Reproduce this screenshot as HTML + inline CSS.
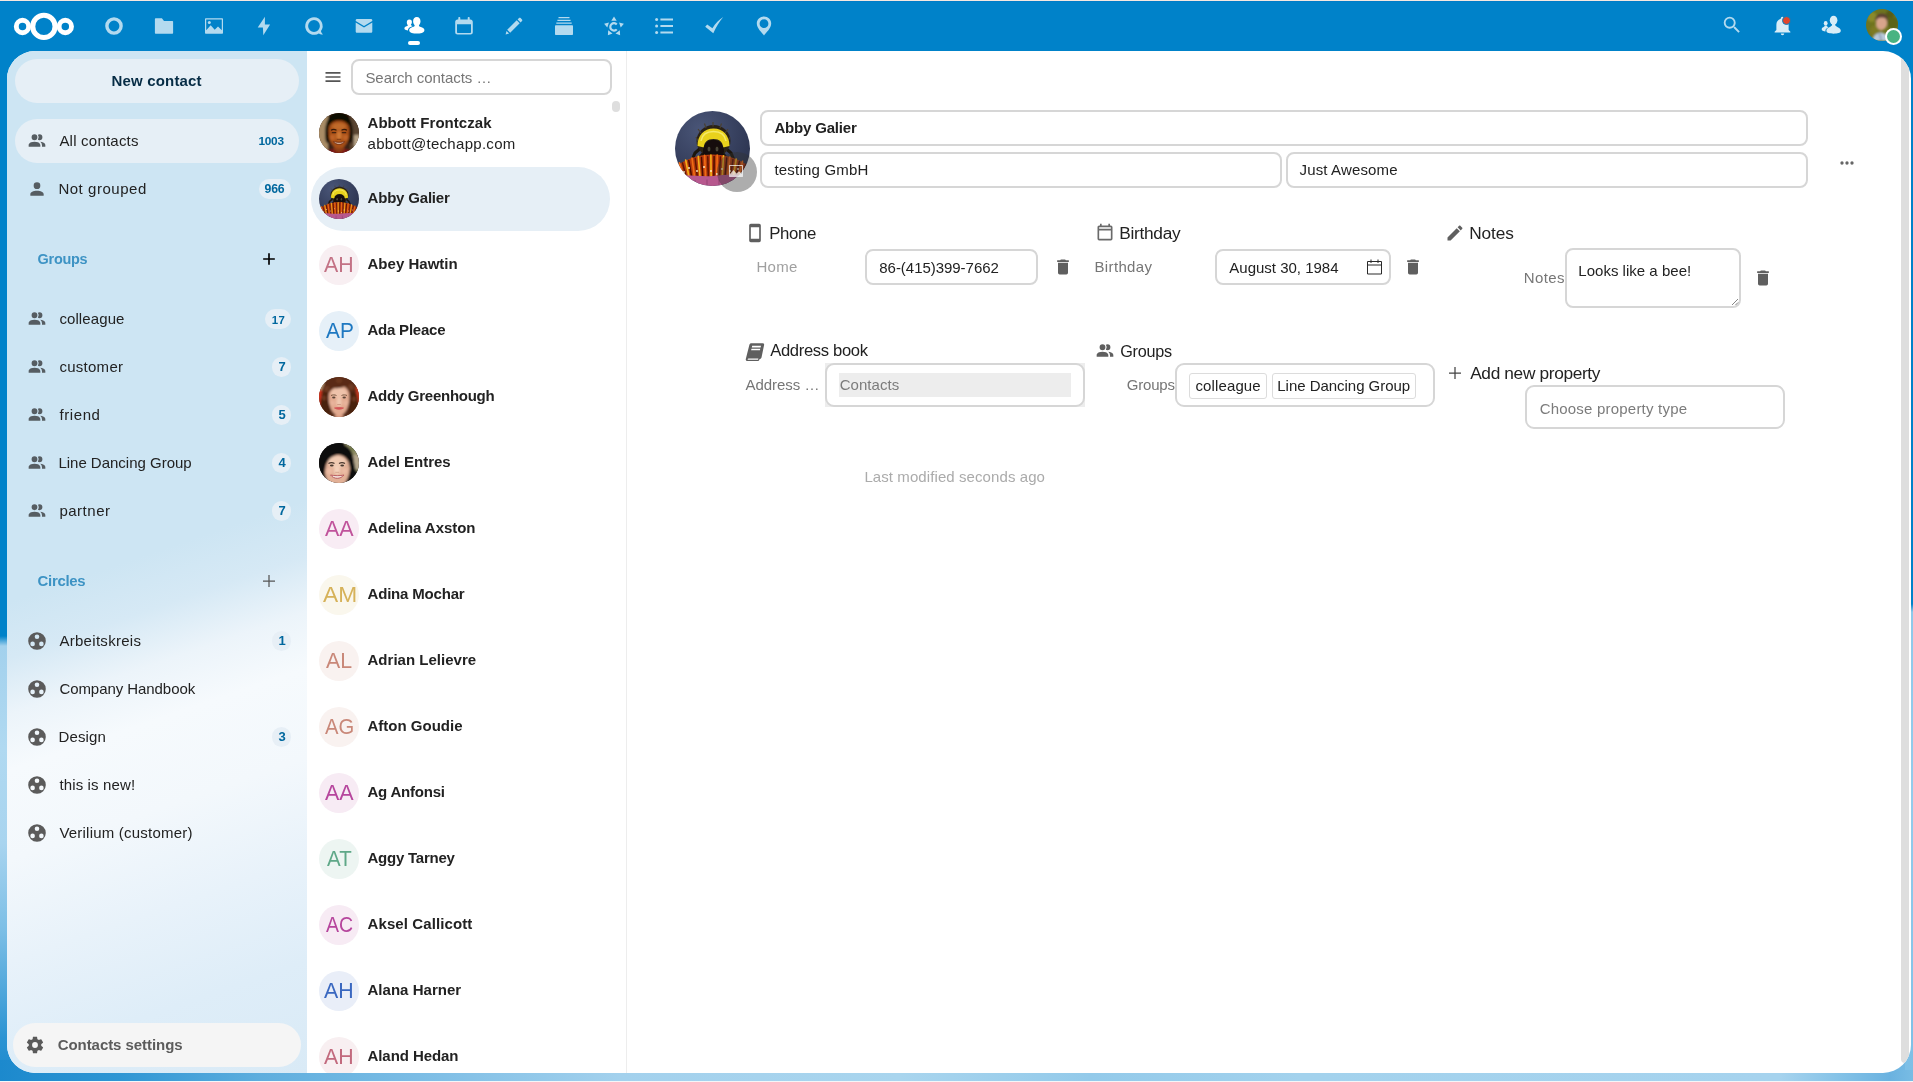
<!DOCTYPE html><html lang="en"><head><meta charset="utf-8"><title>Contacts - Nextcloud</title><style>
*{box-sizing:border-box}
html,body{margin:0;padding:0}
body{width:1913px;height:1082px;overflow:hidden;position:relative;background:#0082c9;font-family:"Liberation Sans",sans-serif;font-size:15px;color:#222}
.a{position:absolute}
.t{position:absolute;white-space:pre}
.i{position:absolute;display:block;overflow:visible}
#bg{position:absolute;left:0;top:0;width:1913px;height:1082px;background:#0082c9}
#content{position:absolute;left:7px;top:51px;width:1904px;height:1022px;border-radius:28px;overflow:hidden;background:#fff}
.pill{position:absolute;border-radius:22px}
.inp{position:absolute;border:2px solid #d6d6d6;border-radius:8px;background:#fff}
.cnt{position:absolute;height:20px;border-radius:10px;background:#e6eff6}
 #tx{position:absolute;left:0;top:0;width:1913px;height:1082px;will-change:transform}
.av{position:absolute;width:40px;height:40px;border-radius:50%;overflow:hidden}
</style></head><body><div id="bg"></div>
<div class="a" style="left:0;top:628px;width:12px;height:454px;background:linear-gradient(180deg,#0082c9 0,#0082c9 8px,#a3d1ed 18px,#b0d9f1 120px,#a8d4ef 215px,#7dbfe6 300px,#4aa4da 370px,#2a93d3 410px,#1c89cd 454px)"></div>
<div class="a" style="left:0;top:1060px;width:1913px;height:21px;background:linear-gradient(90deg,#1c89cd 0,#2f96d4 120px,#5eaede 260px,#7cbde5 420px,#a3d1ed 620px,#a9d5ee 900px,#93caea 1090px,#a3d2ed 1300px,#a6d3ee 1780px,#84c2e7 1840px,#6ab2e0 1890px,#78bce4 1913px)"></div>
<div class="a" style="left:1905px;top:600px;width:8px;height:470px;background:linear-gradient(180deg,#0082c9 0,#0082c9 4px,#8fc9ea 12px,#93cbeb 200px,#86c4e8 380px,#7dbfe6 470px)"></div>
<div class="a" style="left:0;top:0;width:1913px;height:1px;background:#f5e8e0"></div><div class="a" style="left:0;top:1px;width:1913px;height:1px;background:#007cc8"></div>
<div class="a" style="left:0;top:1081px;width:1913px;height:1px;background:#f4f6f8"></div>
<svg class="i" style="left:10px;top:8px" width="70" height="38" viewBox="10 8 70 38"><circle cx="43.9" cy="26.4" r="11.15" fill="none" stroke="#fff" stroke-width="5.1"/><circle cx="22.5" cy="26.5" r="6.2" fill="none" stroke="#fff" stroke-width="4.9"/><circle cx="65.3" cy="26.5" r="6.2" fill="none" stroke="#fff" stroke-width="4.9"/></svg><svg class="i" style="left:104.00px;top:16.00px;color:#b3daef" width="20" height="20" viewBox="0 0 20 20" fill="currentColor"><circle cx="10" cy="10" r="7.1" fill="none" stroke="currentColor" stroke-width="3.4"/></svg><svg class="i" style="left:154.00px;top:16.00px;color:#b3daef" width="20" height="20" viewBox="0 0 20 20" fill="currentColor"><path d="M1.6 2.3c-.4 0-.7.3-.7.7v14c0 .4.3.7.7.7h16.8c.4 0 .7-.3.7-.7V5.6c0-.4-.3-.7-.7-.7H10L7.900 2.300z"/></svg><svg class="i" style="left:204.00px;top:16.00px;color:#b3daef" width="20" height="20" viewBox="0 0 20 20" fill="currentColor"><path fill-rule="evenodd" d="M1.7 2.300h16.600c.4 0 .7.300.7.700v14c0 .400-.3.700-.7.700H1.700c-.4 0-.7-.3-.7-.7V3c0-.4.3-.7.7-.7zM2.200 3.500v10.700l4.500-5 4 4.500 3.300-3.100 3.800 3.600V3.500z"/><circle cx="5.300" cy="6.400" r="1.500"/></svg><svg class="i" style="left:254.00px;top:16.00px;color:#b3daef" width="20" height="20" viewBox="0 0 20 20" fill="currentColor"><path d="M10.900.800 3.700 11.400h5.200L9.300 19.200 16.100 8.600h-5.200z"/></svg><svg class="i" style="left:304.00px;top:16.00px;color:#b3daef" width="20" height="20" viewBox="0 0 20 20" fill="currentColor"><path fill-rule="evenodd" d="M10 1.200a8.800 8.800 0 1 0 4.700 16.250c1 .55 2.700 1.100 4.300.95-1.300-1.050-1.900-2.300-2.050-3.300A8.800 8.800 0 0 0 10 1.200zm0 2.900a5.900 5.900 0 1 1 0 11.800 5.900 5.900 0 0 1 0-11.800z"/></svg><svg class="i" style="left:354.00px;top:16.00px;color:#b3daef" width="20" height="20" viewBox="0 0 20 20" fill="currentColor"><path d="M3 3.100c-.7 0-1.300.6-1.300 1.300v.5l8.300 5.100 8.300-5.100v-.5c0-.7-.6-1.300-1.300-1.300zM1.700 6.500v8.900c0 .7.600 1.300 1.300 1.300h14c.7 0 1.300-.6 1.300-1.300V6.500l-8.300 5.100z"/></svg><svg class="i" style="left:404.00px;top:16.00px;color:#fff" width="20" height="20" viewBox="0 0 20 20" fill="currentColor"><path d="M12.800.9c-2.300 0-3.700 1.800-3.700 4.300 0 1.500.5 2.900 1.400 3.800.3.300.3.900-.1 1.200-.8.500-2.600 1-3.900 1.800-.9.600-1.300 1.300-1.300 2.300 0 1.700 1.300 2.300 2.500 2.700 1.500.4 3.300.5 5.100.5s3.600-.1 5.100-.5c1.200-.4 2.500-1 2.500-2.700 0-1-.4-1.700-1.300-2.300-1.300-.8-3.100-1.300-3.900-1.800-.4-.3-.4-.9-.1-1.200.9-.9 1.400-2.300 1.400-3.800 0-2.500-1.400-4.300-3.700-4.300z"/><path d="M5.200 3.600c-1.500 0-2.400 1.200-2.400 2.800 0 1 .3 1.900.9 2.500.2.200.2.600-.1.800-.5.300-1.500.6-2.300 1.100-.6.400-.9.900-.9 1.500 0 1.100.8 1.500 1.600 1.800.6.200 1.300.3 2 .300-.1-.9.300-2.100 1.500-2.900 1-.6 2.300-1.100 3.300-1.500-.7-.3-1.300-.5-1.700-.8-.3-.2-.3-.6-.1-.8.600-.6.900-1.500.9-2.500 0-.5-.1-1-.3-1.400-.4-.6-1.200-.9-2.400-.9z"/></svg><svg class="i" style="left:454.00px;top:16.00px;color:#b3daef" width="20" height="20" viewBox="0 0 20 20" fill="currentColor"><path fill-rule="evenodd" d="M5.300 1c-.6 0-1 .4-1 1v1.600H3.500c-1.300 0-2.300 1-2.300 2.300v10.400c0 1.300 1 2.300 2.300 2.300h13c1.300 0 2.300-1 2.300-2.300V5.900c0-1.300-1-2.300-2.300-2.300h-.8V2c0-.6-.4-1-1-1s-1 .4-1 1v1.600H6.300V2c0-.6-.4-1-1-1zM3 8.300h14v7.900c0 .4-.3.700-.7.700H3.700c-.4 0-.7-.3-.7-.7z"/></svg><svg class="i" style="left:504.00px;top:16.00px;color:#b3daef" width="20" height="20" viewBox="0 0 20 20" fill="currentColor"><path d="M15.800 1.700c-.3 0-.6.100-.8.300l-1.400 1.400 3 3 1.400-1.400c.4-.4.4-1.100 0-1.600l-1.400-1.400c-.2-.2-.5-.3-.8-.3zM12.700 4.300 3.200 13.800l3 3 9.500-9.500zM2.500 14.900l-.9 3.500 3.500-.9z"/></svg><svg class="i" style="left:554.00px;top:16.00px;color:#b3daef" width="20" height="20" viewBox="0 0 20 20" fill="currentColor"><path d="M4.500 1h11v1.300h-11zM3.400 3.700h13.200V5H3.400zM2.300 6.400h15.400v1.300H2.300zM2 9.200c-.6 0-1 .4-1 1V18c0 .6.400 1 1 1h16c.6 0 1-.4 1-1v-7.800c0-.6-.4-1-1-1z"/></svg><svg class="i" style="left:604.00px;top:16.00px;color:#b3daef" width="20" height="20" viewBox="0 0 20 20" fill="currentColor"><path d="M10.00 0.50L12.70 4.70L7.30 4.70zM19.89 7.69L16.73 11.55L15.06 6.42zM16.11 19.31L11.46 17.50L15.83 14.33zM3.89 19.31L4.17 14.33L8.54 17.50zM0.11 7.69L4.94 6.42L3.27 11.55z"/><path fill="none" stroke="currentColor" stroke-width="2.2" d="M12.75 13.38A3.70 3.70 0 1 1 12.75 8.42"/></svg><svg class="i" style="left:654.00px;top:16.00px;color:#b3daef" width="20" height="20" viewBox="0 0 20 20" fill="currentColor"><circle cx="2.600" cy="3.600" r="1.500"/><circle cx="2.600" cy="10" r="1.500"/><circle cx="2.600" cy="16.400" r="1.500"/><path d="M6.400 2.600H19v2H6.400zM6.400 9H19v2H6.400zM6.400 15.400H19v2H6.400z"/></svg><svg class="i" style="left:704.00px;top:16.00px;color:#b3daef" width="20" height="20" viewBox="0 0 20 20" fill="currentColor"><path d="M19.300 1C15.500 5.500 12 11 9.300 17.200L1.200 10.800l2-2.200 5.200 3.700C11.500 7.500 15 3.500 19.300 1z"/></svg><svg class="i" style="left:754.00px;top:16.00px;color:#b3daef" width="20" height="20" viewBox="0 0 20 20" fill="currentColor"><path fill-rule="evenodd" d="M10 .6C6 .6 2.800 3.700 2.800 7.600c0 4.900 5 8.800 7.200 11.900 2.200-3.100 7.200-7 7.200-11.900C17.200 3.700 14 .6 10 .6zm0 2.700a4.400 4.400 0 1 1 0 8.800 4.400 4.400 0 0 1 0-8.800z"/></svg><div class="a" style="left:408px;top:40.5px;width:12px;height:4px;border-radius:2px;background:#fff"></div><svg class="i" style="left:1721.00px;top:14.40px;" width="22" height="22" viewBox="0 0 24 24"><path fill="#b3daef" d="M9.5,3A6.5,6.5 0 0,1 16,9.5C16,11.11 15.41,12.59 14.44,13.73L14.71,14H15.5L20.5,19L19,20.5L14,15.5V14.71L13.73,14.44C12.59,15.41 11.11,16 9.5,16A6.5,6.5 0 0,1 3,9.5A6.5,6.5 0 0,1 9.5,3M9.5,5C7,5 5,7 5,9.5C5,12 7,14 9.5,14C12,14 14,12 14,9.5C14,7 12,5 9.5,5Z"/></svg><svg class="i" style="left:1771.50px;top:15.10px;" width="21" height="21" viewBox="0 0 24 24"><path fill="#d9edf7" d="M21,19V20H3V19L5,17V11C5,7.9 7.03,5.17 10,4.29C10,4.19 10,4.1 10,4A2,2 0 0,1 12,2A2,2 0 0,1 14,4C14,4.1 14,4.19 14,4.29C16.97,5.17 19,7.9 19,11V17L21,19M14,21A2,2 0 0,1 12,23A2,2 0 0,1 10,21"/></svg><div class="a" style="left:1781.9px;top:15.700px;width:9.2px;height:9.2px;border-radius:50%;background:#e0452c;border:1.300px solid #0082c9"></div><svg class="i" style="left:1819px;top:13px" width="24" height="24" viewBox="1819 13 24 24" fill="#d9edf7"><ellipse cx="1833.6" cy="20.3" rx="3.800" ry="4.500"/><path d="M1826.400 30.800c0-3.300 3.800-3.600 5.500-5.400.3-.4.300-1 0-1.400h3.400c-.3.400-.3 1 0 1.400 1.700 1.800 5.500 2.100 5.500 5.400 0 2.200-3.600 2.900-7.200 2.900s-7.200-.7-7.200-2.900z"/><ellipse cx="1825.700" cy="23.300" rx="1.900" ry="2.300"/><path d="M1821.700 29.200c0-1.700 1.900-1.900 2.800-2.900.2-.2.200-.5 0-.8h2.400c-.2.300-.2.600 0 .8.400.400 1 .700 1.600 1-1.700.800-3.100 1.700-3.100 3.600 0 .2 0 .3.100.5-2.100-.2-3.800-.8-3.800-2.200z"/></svg><svg class="i" style="left:1866px;top:9px" width="32" height="32" viewBox="0 0 32 32"><defs><clipPath id="uc"><circle cx="16" cy="16" r="16"/></clipPath><filter id="ub"><feGaussianBlur stdDeviation="0.9"/></filter></defs><g clip-path="url(#uc)"><rect width="32" height="32" fill="#6e7420"/><g filter="url(#ub)"><circle cx="6" cy="8" r="5" fill="#8a8a2c"/><circle cx="27" cy="14" r="6" fill="#5c6418"/><circle cx="10" cy="22" r="6" fill="#7d7a22"/><circle cx="24" cy="5" r="4" fill="#565c14"/><path d="M6 32c1-6 5-8 9-8.500 4 .5 8 2.500 9 8.500z" fill="#b9c9da"/><ellipse cx="15.500" cy="14" rx="5.600" ry="7" fill="#d8a58c"/><path d="M9.300 13c-.8-5 2-8.500 6.500-8.500s7 3 6 8.500c-1-3-2.500-4.500-6-4.500s-5.500 1.500-6.500 4.500z" fill="#5b4032"/><path d="M13.500 24.500 15.500 32" stroke="#6e7f95" stroke-width="1"/></g></g></svg><div class="a" style="left:1885px;top:28px;width:17px;height:17px;border-radius:50%;background:#fff"></div><div class="a" style="left:1887px;top:30px;width:13px;height:13px;border-radius:50%;background:#49b382"></div>
<div id="content"><div class="a" style="left:0;top:0;width:300px;height:1022px;background:linear-gradient(180deg,rgba(205,229,243,0) 0,rgba(205,229,243,0) 100%),linear-gradient(161deg,#cde5f3 0,#cde5f3 49%,#d6e9f5 54%,#ecf4fa 59%,#f6fafd 64%,#f3f8fc 72%,#e8f2fa 81%,#deedf8 90%,#d9eaf6 100%)"></div><div class="a" style="left:619px;top:0;width:1px;height:1022px;background:#ededed"></div><div class="a" style="left:1894px;top:6px;width:8px;height:1006px;border-radius:0 0 4px 4px;background:#dedede"></div></div>
<div class="pill" style="left:15px;top:59px;width:284px;height:44px;background:#e6eff6"></div><div class="pill" style="left:15px;top:119px;width:284px;height:44px;background:#e6eff6"></div><svg class="i" style="left:27.00px;top:131.00px;" width="20" height="20" viewBox="0 0 24 24"><path fill="#565d62" d="M16 17V19H2V17S2 13 9 13 16 17 16 17M12.5 7.5A3.5 3.5 0 1 0 9 11A3.5 3.5 0 0 0 12.5 7.5M15.94 13A5.32 5.32 0 0 1 18 17V19H22V17S22 13.37 15.94 13M15 4A3.39 3.39 0 0 0 13.07 4.59A5 5 0 0 1 13.07 10.41A3.39 3.39 0 0 0 15 11A3.5 3.5 0 0 0 15 4Z"/></svg><svg class="i" style="left:27.00px;top:179.00px;" width="20" height="20" viewBox="0 0 24 24"><path fill="#565d62" d="M12,4A4,4 0 0,1 16,8A4,4 0 0,1 12,12A4,4 0 0,1 8,8A4,4 0 0,1 12,4M12,14C16.42,14 20,15.79 20,18V20H4V18C4,15.79 7.58,14 12,14Z"/></svg><div class="cnt" style="left:259px;top:179px;width:32px"></div><svg class="i" style="left:259.00px;top:249.00px;" width="20" height="20" viewBox="0 0 24 24"><path fill="#000" d="M19,13H13V19H11V13H5V11H11V5H13V11H19V13Z"/></svg><svg class="i" style="left:27.00px;top:309.00px;" width="20" height="20" viewBox="0 0 24 24"><path fill="#565d62" d="M16 17V19H2V17S2 13 9 13 16 17 16 17M12.5 7.5A3.5 3.5 0 1 0 9 11A3.5 3.5 0 0 0 12.5 7.5M15.94 13A5.32 5.32 0 0 1 18 17V19H22V17S22 13.37 15.94 13M15 4A3.39 3.39 0 0 0 13.07 4.59A5 5 0 0 1 13.07 10.41A3.39 3.39 0 0 0 15 11A3.5 3.5 0 0 0 15 4Z"/></svg><div class="cnt" style="left:265px;top:309px;width:26px"></div><svg class="i" style="left:27.00px;top:357.00px;" width="20" height="20" viewBox="0 0 24 24"><path fill="#565d62" d="M16 17V19H2V17S2 13 9 13 16 17 16 17M12.5 7.5A3.5 3.5 0 1 0 9 11A3.5 3.5 0 0 0 12.5 7.5M15.94 13A5.32 5.32 0 0 1 18 17V19H22V17S22 13.37 15.94 13M15 4A3.39 3.39 0 0 0 13.07 4.59A5 5 0 0 1 13.07 10.41A3.39 3.39 0 0 0 15 11A3.5 3.5 0 0 0 15 4Z"/></svg><div class="cnt" style="left:272px;top:357px;width:19px"></div><svg class="i" style="left:27.00px;top:405.00px;" width="20" height="20" viewBox="0 0 24 24"><path fill="#565d62" d="M16 17V19H2V17S2 13 9 13 16 17 16 17M12.5 7.5A3.5 3.5 0 1 0 9 11A3.5 3.5 0 0 0 12.5 7.5M15.94 13A5.32 5.32 0 0 1 18 17V19H22V17S22 13.37 15.94 13M15 4A3.39 3.39 0 0 0 13.07 4.59A5 5 0 0 1 13.07 10.41A3.39 3.39 0 0 0 15 11A3.5 3.5 0 0 0 15 4Z"/></svg><div class="cnt" style="left:272px;top:405px;width:19px"></div><svg class="i" style="left:27.00px;top:453.00px;" width="20" height="20" viewBox="0 0 24 24"><path fill="#565d62" d="M16 17V19H2V17S2 13 9 13 16 17 16 17M12.5 7.5A3.5 3.5 0 1 0 9 11A3.5 3.5 0 0 0 12.5 7.5M15.94 13A5.32 5.32 0 0 1 18 17V19H22V17S22 13.37 15.94 13M15 4A3.39 3.39 0 0 0 13.07 4.59A5 5 0 0 1 13.07 10.41A3.39 3.39 0 0 0 15 11A3.5 3.5 0 0 0 15 4Z"/></svg><div class="cnt" style="left:272px;top:453px;width:19px"></div><svg class="i" style="left:27.00px;top:501.00px;" width="20" height="20" viewBox="0 0 24 24"><path fill="#565d62" d="M16 17V19H2V17S2 13 9 13 16 17 16 17M12.5 7.5A3.5 3.5 0 1 0 9 11A3.5 3.5 0 0 0 12.5 7.5M15.94 13A5.32 5.32 0 0 1 18 17V19H22V17S22 13.37 15.94 13M15 4A3.39 3.39 0 0 0 13.07 4.59A5 5 0 0 1 13.07 10.41A3.39 3.39 0 0 0 15 11A3.5 3.5 0 0 0 15 4Z"/></svg><div class="cnt" style="left:272px;top:501px;width:19px"></div><svg class="i" style="left:263px;top:575px" width="12" height="12" viewBox="0 0 12 12"><path d="M6 0v12M0 6h12" stroke="#555" stroke-width="1.250" fill="none"/></svg><svg class="i" style="left:27.00px;top:631.00px;" width="20" height="20" viewBox="0 0 20 20"><path fill="#5b5b5b" fill-rule="evenodd" d="M10 1.200a8.800 8.800 0 1 0 0 17.600 8.800 8.800 0 0 0 0-17.600zm0 2.300a2.300 2.300 0 1 1 0 4.600 2.300 2.300 0 0 1 0-4.600zM5.600 10.600a2.300 2.300 0 1 1 0 4.600 2.300 2.300 0 0 1 0-4.600zm8.800 0a2.300 2.300 0 1 1 0 4.600 2.300 2.300 0 0 1 0-4.600z"/></svg><div class="cnt" style="left:272px;top:631px;width:19px;background:#e7eff6"></div><svg class="i" style="left:27.00px;top:679.00px;" width="20" height="20" viewBox="0 0 20 20"><path fill="#5b5b5b" fill-rule="evenodd" d="M10 1.200a8.800 8.800 0 1 0 0 17.600 8.800 8.800 0 0 0 0-17.600zm0 2.300a2.300 2.300 0 1 1 0 4.600 2.300 2.300 0 0 1 0-4.600zM5.600 10.600a2.300 2.300 0 1 1 0 4.600 2.300 2.300 0 0 1 0-4.600zm8.800 0a2.300 2.300 0 1 1 0 4.600 2.300 2.300 0 0 1 0-4.600z"/></svg><svg class="i" style="left:27.00px;top:727.00px;" width="20" height="20" viewBox="0 0 20 20"><path fill="#5b5b5b" fill-rule="evenodd" d="M10 1.200a8.800 8.800 0 1 0 0 17.600 8.800 8.800 0 0 0 0-17.600zm0 2.300a2.300 2.300 0 1 1 0 4.600 2.300 2.300 0 0 1 0-4.600zM5.600 10.600a2.300 2.300 0 1 1 0 4.600 2.300 2.300 0 0 1 0-4.600zm8.800 0a2.300 2.300 0 1 1 0 4.600 2.300 2.300 0 0 1 0-4.600z"/></svg><div class="cnt" style="left:272px;top:727px;width:19px;background:#e7eff6"></div><svg class="i" style="left:27.00px;top:775.00px;" width="20" height="20" viewBox="0 0 20 20"><path fill="#5b5b5b" fill-rule="evenodd" d="M10 1.200a8.800 8.800 0 1 0 0 17.600 8.800 8.800 0 0 0 0-17.600zm0 2.300a2.300 2.300 0 1 1 0 4.600 2.300 2.300 0 0 1 0-4.600zM5.600 10.600a2.300 2.300 0 1 1 0 4.600 2.300 2.300 0 0 1 0-4.600zm8.800 0a2.300 2.300 0 1 1 0 4.600 2.300 2.300 0 0 1 0-4.600z"/></svg><svg class="i" style="left:27.00px;top:823.00px;" width="20" height="20" viewBox="0 0 20 20"><path fill="#5b5b5b" fill-rule="evenodd" d="M10 1.200a8.800 8.800 0 1 0 0 17.600 8.800 8.800 0 0 0 0-17.600zm0 2.300a2.300 2.300 0 1 1 0 4.600 2.300 2.300 0 0 1 0-4.600zM5.600 10.600a2.300 2.300 0 1 1 0 4.600 2.300 2.300 0 0 1 0-4.600zm8.800 0a2.300 2.300 0 1 1 0 4.600 2.300 2.300 0 0 1 0-4.600z"/></svg><div class="pill" style="left:13px;top:1023px;width:288px;height:44px;background:#f5f5f5"></div><svg class="i" style="left:25.20px;top:1034.80px;" width="20" height="20" viewBox="0 0 24 24"><path fill="#5a5a5a" d="M12,15.5A3.5,3.5 0 0,1 8.5,12A3.5,3.5 0 0,1 12,8.5A3.5,3.5 0 0,1 15.5,12A3.5,3.5 0 0,1 12,15.5M19.43,12.97C19.47,12.65 19.5,12.33 19.5,12C19.5,11.67 19.47,11.34 19.43,11L21.54,9.37C21.73,9.22 21.78,8.95 21.66,8.73L19.66,5.27C19.54,5.05 19.27,4.96 19.05,5.05L16.56,6.05C16.04,5.66 15.5,5.32 14.87,5.07L14.5,2.42C14.46,2.18 14.25,2 14,2H10C9.75,2 9.54,2.18 9.5,2.42L9.13,5.07C8.5,5.32 7.96,5.66 7.44,6.05L4.95,5.05C4.73,4.96 4.46,5.05 4.34,5.27L2.34,8.73C2.21,8.95 2.27,9.22 2.46,9.37L4.57,11C4.53,11.34 4.5,11.67 4.5,12C4.5,12.33 4.53,12.65 4.57,12.97L2.46,14.63C2.27,14.78 2.21,15.05 2.34,15.27L4.34,18.73C4.46,18.95 4.73,19.03 4.95,18.95L7.44,17.94C7.96,18.34 8.5,18.68 9.13,18.93L9.5,21.58C9.54,21.82 9.75,22 10,22H14C14.25,22 14.46,21.82 14.5,21.58L14.87,18.93C15.5,18.67 16.04,18.34 16.56,17.94L19.05,18.95C19.27,19.03 19.54,18.95 19.66,18.73L21.66,15.27C21.78,15.05 21.73,14.78 21.54,14.63L19.43,12.97Z"/></svg>
<div class="a" style="left:0;top:0;width:1913px;height:1073px;overflow:hidden"><svg class="i" style="left:323.00px;top:67.00px;" width="20" height="20" viewBox="0 0 24 24"><path fill="#555" d="M3,6H21V8H3V6M3,11H21V13H3V11M3,16H21V18H3V16Z"/></svg><div class="inp" style="left:351px;top:59px;width:261px;height:36px"></div><div class="a" style="left:612px;top:101px;width:8px;height:11px;border-radius:4px;background:#dedede"></div><div class="a" style="left:311px;top:167px;width:299px;height:64px;border-radius:32px;background:#e6eff6"></div><div class="av" style="left:319px;top:113px"><svg width="40" height="40" viewBox="0 0 40 40"><defs><filter id="fb1" x="-10%" y="-10%" width="120%" height="120%"><feGaussianBlur stdDeviation="0.9"/></filter></defs><rect width="40" height="40" fill="#3a2414"/><g filter="url(#fb1)"><rect x="-10" y="-10" width="60" height="60" fill="#3a2414"/><rect x="-10" y="-10" width="19" height="60" fill="#a98c66"/><rect x="31" y="-10" width="20" height="60" fill="#5a4430"/><rect x="35" y="22" width="16" height="12" fill="#b8a488"/><path d="M7 29C4 10 10 -1 20 -1s16 11 13 30l-3 2V12H10v19z" fill="#0b0705"/><path d="M2 46c1-9 9-9 13-10l5 3 5-3c4 1 12 1 13 10z" fill="#7e1712"/><path d="M15 30h10v7l-5 3-5-3z" fill="#8a3c12"/><path d="M9.500 18c0-7 4.500-10.500 10.500-10.500S30.500 11 30.500 18c0 8-3.500 17.500-10.500 17.500S9.500 26 9.500 18z" fill="#a85018"/><ellipse cx="20" cy="13.500" rx="7" ry="3.500" fill="#c06a2a"/><ellipse cx="20" cy="22.500" rx="2.600" ry="4.500" fill="#cf7834"/><ellipse cx="13.500" cy="24.500" rx="2.800" ry="3" fill="#bf6426"/><ellipse cx="26.500" cy="24.500" rx="2.800" ry="3" fill="#bf6426"/></g><g opacity=".8"><path d="M12 17.200c1.500-.8 4-.8 5.500 0M22.500 17.200c1.500-.8 4-.8 5.500 0" stroke="#1a0c06" stroke-width="1.200" fill="none"/><path d="M12.800 19.600h4.400M22.800 19.600h4.400" stroke="#2a1810" stroke-width="1.300"/><path d="M17.800 26.300h4.400" stroke="#6a2c0c" stroke-width=".9"/><path d="M14.500 28.600c3 1 8 1 11 0-1.500 3.600-9.500 3.600-11 0z" fill="#f4e6dc" stroke="#5a1c0a" stroke-width=".8"/></g></svg></div><div class="av" style="left:319px;top:179px"><svg width="40" height="40" viewBox="0 0 75 75"><defs><filter id="fb2" x="-10%" y="-10%" width="120%" height="120%"><feGaussianBlur stdDeviation="0.9"/></filter><radialGradient id="fb2g" cx="35%" cy="25%" r="75%"><stop offset="0" stop-color="#4a5678"/><stop offset="1" stop-color="#2c3450"/></radialGradient></defs><rect width="75" height="75" fill="url(#fb2g)"/><g filter="url(#fb2)"><path d="M28 35 20 42 15 54M30 40 24 48 22 56M48 35 56 42 61 54M46 40 52 48 54 56" stroke="#1a140c" stroke-width="3" fill="none" stroke-linecap="round"/><ellipse cx="38.500" cy="30" rx="17" ry="16" fill="#2b2317"/><path d="M23 30 21 26M26 22 23 18M31 17 29.500 12.500M38 15.500V11M45 17 46.500 12.500M50 22 53 18M53 30 55 26" stroke="#4a4030" stroke-width="1.200"/><path d="M22.500 35C22.500 24 29 17.500 38.500 17.500S54.500 24 54.500 35L48 36.500C48 31 44.500 28 38.500 28S29 31 29 36.500z" fill="#e9d21e"/><path d="M26 30C27 24 31.500 20.500 38.500 20.500S50 24 51 30" stroke="#f6ea6a" stroke-width="1.500" fill="none"/><ellipse cx="38.500" cy="40" rx="10.500" ry="11" fill="#120d08"/><ellipse cx="34" cy="38" rx="1.500" ry="2.500" fill="#4a4438"/><ellipse cx="42" cy="38" rx="1.500" ry="2.500" fill="#4a4438"/><path d="M-2 58C9 48 24 43.500 37.500 43.500S66 48 77 58V70H-2z" fill="#b63a0a"/><path d="M2.9 66 -1.9 55.1" stroke="#f4ae1a" stroke-width="1.7" stroke-linecap="round"/><path d="M5.7 66 1.2 54.9" stroke="#4a0e04" stroke-width="1.5" stroke-linecap="round"/><path d="M8.4 66 4.4 51.8" stroke="#ee6c14" stroke-width="1.7" stroke-linecap="round"/><path d="M11.2 66 7.5 51.9" stroke="#5e1606" stroke-width="1.5" stroke-linecap="round"/><path d="M14.0 66 10.7 49.1" stroke="#f4ae1a" stroke-width="1.7" stroke-linecap="round"/><path d="M16.7 66 13.8 49.5" stroke="#4a0e04" stroke-width="1.5" stroke-linecap="round"/><path d="M19.5 66 17.0 47.0" stroke="#ee6c14" stroke-width="1.7" stroke-linecap="round"/><path d="M22.3 66 20.2 47.6" stroke="#5e1606" stroke-width="1.5" stroke-linecap="round"/><path d="M25.0 66 23.3 45.4" stroke="#f4ae1a" stroke-width="1.7" stroke-linecap="round"/><path d="M27.8 66 26.5 46.4" stroke="#4a0e04" stroke-width="1.5" stroke-linecap="round"/><path d="M30.6 66 29.6 44.4" stroke="#ee6c14" stroke-width="1.7" stroke-linecap="round"/><path d="M33.3 66 32.8 45.7" stroke="#5e1606" stroke-width="1.5" stroke-linecap="round"/><path d="M36.1 66 35.9 44.0" stroke="#f4ae1a" stroke-width="1.7" stroke-linecap="round"/><path d="M38.9 66 39.1 45.5" stroke="#4a0e04" stroke-width="1.5" stroke-linecap="round"/><path d="M41.7 66 42.2 44.2" stroke="#ee6c14" stroke-width="1.7" stroke-linecap="round"/><path d="M44.4 66 45.4 45.9" stroke="#5e1606" stroke-width="1.5" stroke-linecap="round"/><path d="M47.2 66 48.5 44.9" stroke="#f4ae1a" stroke-width="1.7" stroke-linecap="round"/><path d="M50.0 66 51.7 46.9" stroke="#4a0e04" stroke-width="1.5" stroke-linecap="round"/><path d="M52.7 66 54.8 46.1" stroke="#ee6c14" stroke-width="1.7" stroke-linecap="round"/><path d="M55.5 66 58.0 48.5" stroke="#5e1606" stroke-width="1.5" stroke-linecap="round"/><path d="M58.3 66 61.2 48.0" stroke="#f4ae1a" stroke-width="1.7" stroke-linecap="round"/><path d="M61.0 66 64.3 50.6" stroke="#4a0e04" stroke-width="1.5" stroke-linecap="round"/><path d="M63.8 66 67.5 50.4" stroke="#ee6c14" stroke-width="1.7" stroke-linecap="round"/><path d="M66.6 66 70.6 53.3" stroke="#5e1606" stroke-width="1.5" stroke-linecap="round"/><path d="M69.3 66 73.8 53.4" stroke="#f4ae1a" stroke-width="1.7" stroke-linecap="round"/><path d="M72.1 66 76.9 56.6" stroke="#4a0e04" stroke-width="1.5" stroke-linecap="round"/><circle cx="9" cy="61" r=".9" fill="#fff3d0"/><circle cx="14" cy="57" r=".9" fill="#fff3d0"/><circle cx="22" cy="60" r=".9" fill="#fff3d0"/><circle cx="29" cy="56" r=".9" fill="#fff3d0"/><circle cx="47" cy="58" r=".9" fill="#fff3d0"/><circle cx="55" cy="60" r=".9" fill="#fff3d0"/><circle cx="63" cy="58" r=".9" fill="#fff3d0"/><circle cx="67" cy="62" r=".9" fill="#fff3d0"/><circle cx="36" cy="60" r=".9" fill="#fff3d0"/><circle cx="42" cy="63" r=".9" fill="#fff3d0"/><path d="M-2 65C12 63 26 66 37.500 65S62 63 77 65V80H-2z" fill="#b7588e"/><path d="M8 76V68M20 76V69M32 76V68.500M44 76V68.500M56 76V69M67 76V68" stroke="#9c4678" stroke-width="1.200"/></g></svg></div><div class="av" style="left:319px;top:245px;background:#f8eff2"></div><div class="av" style="left:319px;top:311px;background:#e6f0f8"></div><div class="av" style="left:319px;top:377px"><svg width="40" height="40" viewBox="0 0 40 40"><defs><filter id="fb3" x="-10%" y="-10%" width="120%" height="120%"><feGaussianBlur stdDeviation="0.9"/></filter></defs><rect width="40" height="40" fill="#552a16"/><g filter="url(#fb3)"><rect x="-10" y="-10" width="60" height="60" fill="#552a16"/><rect x="-10" y="13" width="15" height="22" fill="#d6301c"/><rect x="-10" y="-10" width="15" height="23" fill="#b9936c"/><rect x="35" y="10" width="15" height="16" fill="#c8381f"/><ellipse cx="20" cy="17" rx="17.500" ry="18" fill="#5a2c17"/><ellipse cx="6.500" cy="27" rx="5.500" ry="12" fill="#482010"/><ellipse cx="34" cy="27" rx="5.500" ry="12" fill="#482010"/><circle cx="8" cy="12" r="3" fill="#6e3a20"/><circle cx="32" cy="10" r="3" fill="#6e3a20"/><circle cx="20" cy="3.500" r="3" fill="#6a361c"/><circle cx="5" cy="21" r="2.500" fill="#6a361c"/><circle cx="35" cy="22" r="2.500" fill="#6a361c"/><path d="M15 44c0-5 2-8 5-8s5 3 5 8z" fill="#d99c82"/><path d="M9.500 20c0-8 4.500-12 10.500-12s10.500 4 10.500 12c0 9-4 18.500-10.500 18.500S9.500 29 9.500 20z" fill="#e2aa90"/><ellipse cx="20" cy="16" rx="8" ry="5" fill="#eec2aa"/><ellipse cx="20" cy="25" rx="2.600" ry="4.500" fill="#f0c8b0"/><ellipse cx="13.500" cy="26" rx="2.500" ry="2.500" fill="#e8b49c"/><ellipse cx="26.500" cy="26" rx="2.500" ry="2.500" fill="#e8b49c"/><path d="M8.500 19c.5-9 5-13 11.500-13s11 4 11.500 13c-1.500-5-3.500-8.500-6.500-9.500-2 1.500-6 2-9.500 1.500-3 1.500-5.500 4-7 8z" fill="#5a2c17"/></g><g opacity=".8"><path d="M12 18.500c1.500-.8 4-.8 5.500 0M22.500 18.500c1.500-.8 4-.8 5.500 0" stroke="#5a3a26" stroke-width="1" fill="none"/><ellipse cx="14.800" cy="20.500" rx="1.700" ry=".9" fill="#3a2a20"/><ellipse cx="25.200" cy="20.500" rx="1.700" ry=".9" fill="#3a2a20"/><path d="M18.200 27.500h3.600" stroke="#c08870" stroke-width=".8"/><path d="M15.500 31c2.800 1.800 6.200 1.800 9 0-2.800-.6-6.200-.6-9 0z" fill="#d0424a" stroke="#d0424a" stroke-width=".8"/></g></svg></div><div class="av" style="left:319px;top:443px"><svg width="40" height="40" viewBox="0 0 40 40"><defs><filter id="fb4" x="-10%" y="-10%" width="120%" height="120%"><feGaussianBlur stdDeviation="0.9"/></filter></defs><rect width="40" height="40" fill="#0d0b0b"/><g filter="url(#fb4)"><rect x="-10" y="-10" width="60" height="60" fill="#0d0b0b"/><path d="M22 -10h30v44l-17-7-6-15z" fill="#8e8c64"/><path d="M33 12h17v14h-14z" fill="#b6a88e"/><path d="M26 -10h10l3 16-6 2z" fill="#6e7a44"/><path d="M5 23c0-10 5.500-15 13-15s13 5 13 15c0 11-5 21-13 21S5 34 5 23z" fill="#e2b096"/><ellipse cx="18" cy="19" rx="9" ry="6" fill="#f0cab2"/><ellipse cx="18" cy="27" rx="3" ry="4.500" fill="#f4d0ba"/><ellipse cx="10.500" cy="28" rx="3" ry="3" fill="#ecbca4"/><ellipse cx="25.500" cy="28" rx="3" ry="3" fill="#ecbca4"/><path d="M-2 34C-4 13 5 1 19.500 1c9 0 14 6 15 14.500 1 7 2 13 4.500 17.500l-4.500 8c-2-7.500-3-15.500-5-22-3-6-8-8-13.500-6.500C9.500 14.500 6 21 6 30c0 4 1 8 2 11H0z" fill="#0d0b0b"/></g><g opacity=".8"><path d="M9.500 20.500c1.500-.9 4.500-.9 6 0M20 20.500c1.500-.9 4.500-.9 6 0" stroke="#22140e" stroke-width="1.200" fill="none"/><ellipse cx="12.800" cy="22.500" rx="1.900" ry="1" fill="#1e1410"/><ellipse cx="23.200" cy="22.500" rx="1.900" ry="1" fill="#1e1410"/><path d="M16.300 29.300h3.800" stroke="#c89078" stroke-width=".8"/><path d="M11.500 32c3.500 4.400 10 4.400 13.500 0-3.500.900-10 .900-13.500 0z" fill="#faf4f2" stroke="#b04a56" stroke-width="1"/></g></svg></div><div class="av" style="left:319px;top:509px;background:#f8ecf4"></div><div class="av" style="left:319px;top:575px;background:#faf7ed"></div><div class="av" style="left:319px;top:641px;background:#f9f2f0"></div><div class="av" style="left:319px;top:707px;background:#f9f2f0"></div><div class="av" style="left:319px;top:773px;background:#f7ebf4"></div><div class="av" style="left:319px;top:839px;background:#edf5f2"></div><div class="av" style="left:319px;top:905px;background:#f7ebf4"></div><div class="av" style="left:319px;top:971px;background:#e9eef8"></div><div class="av" style="left:319px;top:1037px;background:#f8eff1"></div></div>
<div class="av" style="left:675px;top:110.5px;width:75px;height:75px"><svg width="75" height="75" viewBox="0 0 75 75"><defs><filter id="fb5" x="-10%" y="-10%" width="120%" height="120%"><feGaussianBlur stdDeviation="0.45"/></filter><radialGradient id="fb5g" cx="35%" cy="25%" r="75%"><stop offset="0" stop-color="#4a5678"/><stop offset="1" stop-color="#2c3450"/></radialGradient></defs><rect width="75" height="75" fill="url(#fb5g)"/><g filter="url(#fb5)"><path d="M28 35 20 42 15 54M30 40 24 48 22 56M48 35 56 42 61 54M46 40 52 48 54 56" stroke="#1a140c" stroke-width="3" fill="none" stroke-linecap="round"/><ellipse cx="38.500" cy="30" rx="17" ry="16" fill="#2b2317"/><path d="M23 30 21 26M26 22 23 18M31 17 29.500 12.500M38 15.500V11M45 17 46.500 12.500M50 22 53 18M53 30 55 26" stroke="#4a4030" stroke-width="1.200"/><path d="M22.500 35C22.500 24 29 17.500 38.500 17.500S54.500 24 54.500 35L48 36.500C48 31 44.500 28 38.500 28S29 31 29 36.500z" fill="#e9d21e"/><path d="M26 30C27 24 31.500 20.500 38.500 20.500S50 24 51 30" stroke="#f6ea6a" stroke-width="1.500" fill="none"/><ellipse cx="38.500" cy="40" rx="10.500" ry="11" fill="#120d08"/><ellipse cx="34" cy="38" rx="1.500" ry="2.500" fill="#4a4438"/><ellipse cx="42" cy="38" rx="1.500" ry="2.500" fill="#4a4438"/><path d="M-2 58C9 48 24 43.500 37.500 43.500S66 48 77 58V70H-2z" fill="#b63a0a"/><path d="M2.9 66 -1.9 55.1" stroke="#f4ae1a" stroke-width="1.7" stroke-linecap="round"/><path d="M5.7 66 1.2 54.9" stroke="#4a0e04" stroke-width="1.5" stroke-linecap="round"/><path d="M8.4 66 4.4 51.8" stroke="#ee6c14" stroke-width="1.7" stroke-linecap="round"/><path d="M11.2 66 7.5 51.9" stroke="#5e1606" stroke-width="1.5" stroke-linecap="round"/><path d="M14.0 66 10.7 49.1" stroke="#f4ae1a" stroke-width="1.7" stroke-linecap="round"/><path d="M16.7 66 13.8 49.5" stroke="#4a0e04" stroke-width="1.5" stroke-linecap="round"/><path d="M19.5 66 17.0 47.0" stroke="#ee6c14" stroke-width="1.7" stroke-linecap="round"/><path d="M22.3 66 20.2 47.6" stroke="#5e1606" stroke-width="1.5" stroke-linecap="round"/><path d="M25.0 66 23.3 45.4" stroke="#f4ae1a" stroke-width="1.7" stroke-linecap="round"/><path d="M27.8 66 26.5 46.4" stroke="#4a0e04" stroke-width="1.5" stroke-linecap="round"/><path d="M30.6 66 29.6 44.4" stroke="#ee6c14" stroke-width="1.7" stroke-linecap="round"/><path d="M33.3 66 32.8 45.7" stroke="#5e1606" stroke-width="1.5" stroke-linecap="round"/><path d="M36.1 66 35.9 44.0" stroke="#f4ae1a" stroke-width="1.7" stroke-linecap="round"/><path d="M38.9 66 39.1 45.5" stroke="#4a0e04" stroke-width="1.5" stroke-linecap="round"/><path d="M41.7 66 42.2 44.2" stroke="#ee6c14" stroke-width="1.7" stroke-linecap="round"/><path d="M44.4 66 45.4 45.9" stroke="#5e1606" stroke-width="1.5" stroke-linecap="round"/><path d="M47.2 66 48.5 44.9" stroke="#f4ae1a" stroke-width="1.7" stroke-linecap="round"/><path d="M50.0 66 51.7 46.9" stroke="#4a0e04" stroke-width="1.5" stroke-linecap="round"/><path d="M52.7 66 54.8 46.1" stroke="#ee6c14" stroke-width="1.7" stroke-linecap="round"/><path d="M55.5 66 58.0 48.5" stroke="#5e1606" stroke-width="1.5" stroke-linecap="round"/><path d="M58.3 66 61.2 48.0" stroke="#f4ae1a" stroke-width="1.7" stroke-linecap="round"/><path d="M61.0 66 64.3 50.6" stroke="#4a0e04" stroke-width="1.5" stroke-linecap="round"/><path d="M63.8 66 67.5 50.4" stroke="#ee6c14" stroke-width="1.7" stroke-linecap="round"/><path d="M66.6 66 70.6 53.3" stroke="#5e1606" stroke-width="1.5" stroke-linecap="round"/><path d="M69.3 66 73.8 53.4" stroke="#f4ae1a" stroke-width="1.7" stroke-linecap="round"/><path d="M72.1 66 76.9 56.6" stroke="#4a0e04" stroke-width="1.5" stroke-linecap="round"/><circle cx="9" cy="61" r=".9" fill="#fff3d0"/><circle cx="14" cy="57" r=".9" fill="#fff3d0"/><circle cx="22" cy="60" r=".9" fill="#fff3d0"/><circle cx="29" cy="56" r=".9" fill="#fff3d0"/><circle cx="47" cy="58" r=".9" fill="#fff3d0"/><circle cx="55" cy="60" r=".9" fill="#fff3d0"/><circle cx="63" cy="58" r=".9" fill="#fff3d0"/><circle cx="67" cy="62" r=".9" fill="#fff3d0"/><circle cx="36" cy="60" r=".9" fill="#fff3d0"/><circle cx="42" cy="63" r=".9" fill="#fff3d0"/><path d="M-2 65C12 63 26 66 37.500 65S62 63 77 65V80H-2z" fill="#b7588e"/><path d="M8 76V68M20 76V69M32 76V68.500M44 76V68.500M56 76V69M67 76V68" stroke="#9c4678" stroke-width="1.200"/></g></svg></div><div class="a" style="left:717px;top:151.500px;width:40px;height:40px;border-radius:50%;background:rgba(50,50,50,.4)"></div><svg class="i" style="left:727.5px;top:163px;opacity:.7" width="16" height="16" viewBox="0 0 16 16"><path fill="#fff" fill-rule="evenodd" d="M1.500 2h13c.3 0 .5.200.5.500v11c0 .3-.2.500-.5.500h-13c-.3 0-.5-.2-.5-.5v-11c0-.3.200-.5.500-.5zM2 3v8l3.500-4 3 3.500 2.500-2.300 3 2.800V3z"/></svg><div class="inp" style="left:760px;top:110px;width:1048px;height:36px"></div><div class="inp" style="left:760px;top:152px;width:522px;height:36px"></div><div class="inp" style="left:1286px;top:152px;width:522px;height:36px"></div><svg class="i" style="left:1837.00px;top:153.00px;" width="20" height="20" viewBox="0 0 24 24"><path fill="#666" d="M16,12A2,2 0 0,1 18,10A2,2 0 0,1 20,12A2,2 0 0,1 18,14A2,2 0 0,1 16,12M10,12A2,2 0 0,1 12,10A2,2 0 0,1 14,12A2,2 0 0,1 12,14A2,2 0 0,1 10,12M4,12A2,2 0 0,1 6,10A2,2 0 0,1 8,12A2,2 0 0,1 6,14A2,2 0 0,1 4,12Z"/></svg><svg class="i" style="left:745.00px;top:223.00px;" width="20" height="20" viewBox="0 0 24 24"><path fill="#5f5f5f" d="M17,19H7V5H17M17,1H7C5.89,1 5,1.89 5,3V21A2,2 0 0,0 7,23H17A2,2 0 0,0 19,21V3C19,1.89 18.1,1 17,1Z"/></svg><div class="inp" style="left:865px;top:249px;width:173px;height:36px"></div><svg class="i" style="left:1053.00px;top:257.00px;" width="20" height="20" viewBox="0 0 24 24"><path fill="#5f5f5f" d="M19,4H15.5L14.5,3H9.5L8.5,4H5V6H19M6,19A2,2 0 0,0 8,21H16A2,2 0 0,0 18,19V7H6V19Z"/></svg><svg class="i" style="left:1094.80px;top:222.50px;" width="20" height="20" viewBox="0 0 24 24"><path fill="#6a6a6a" d="M19,3H18V1H16V3H8V1H6V3H5C3.89,3 3,3.9 3,5V19A2,2 0 0,0 5,21H19A2,2 0 0,0 21,19V5A2,2 0 0,0 19,3M19,19H5V9H19V19M19,7H5V5H19V7Z"/></svg><div class="inp" style="left:1215px;top:249px;width:176px;height:36px"></div><svg class="i" style="left:1367px;top:258.500px" width="16" height="16" viewBox="0 0 16 16"><path fill="none" stroke="#2a2a2a" stroke-width="1" d="M.500 2.500h14v12.500H.500zM.500 6h14M4 .500v3.500M11 .500v3.500"/></svg><svg class="i" style="left:1403.00px;top:257.00px;" width="20" height="20" viewBox="0 0 24 24"><path fill="#5f5f5f" d="M19,4H15.5L14.5,3H9.5L8.5,4H5V6H19M6,19A2,2 0 0,0 8,21H16A2,2 0 0,0 18,19V7H6V19Z"/></svg><svg class="i" style="left:1445.00px;top:223.00px;" width="20" height="20" viewBox="0 0 24 24"><path fill="#5f5f5f" d="M20.71,7.04C21.1,6.65 21.1,6 20.71,5.63L18.37,3.29C18,2.9 17.35,2.9 16.96,3.29L15.12,5.12L18.87,8.87M3,17.25V21H6.75L17.81,9.93L14.06,6.18L3,17.25Z"/></svg><div class="inp" style="left:1565px;top:248px;width:176px;height:60px"></div><svg class="i" style="left:1731px;top:298px" width="8" height="8" viewBox="0 0 8 8"><path d="M7 1 1 7M7 4.500 4.500 7" stroke="#666" stroke-width=".8"/></svg><svg class="i" style="left:1752.70px;top:268.00px;" width="20" height="20" viewBox="0 0 24 24"><path fill="#5f5f5f" d="M19,4H15.5L14.5,3H9.5L8.5,4H5V6H19M6,19A2,2 0 0,0 8,21H16A2,2 0 0,0 18,19V7H6V19Z"/></svg><svg class="i" style="left:745px;top:341.500px" width="20" height="20" viewBox="0 0 20 20"><path fill="#5f5f5f" fill-rule="evenodd" d="M6.300 1.200h11.400c1 0 1.600.8 1.400 1.700l-2.600 12.600c-.2.900-1 1.500-1.900 1.500l-.3 1c-.2.600-.7 1-1.400 1H2.300c-1.100 0-1.800-1-1.500-2L4.400 2.700c.2-.9 1-1.500 1.900-1.500zM7.200 3.800 6.800 5.400h8.800l.4-1.600zM6.500 6.700 6.100 8.300h8.800l.4-1.600zM3.500 16.400c-.4 0-.7.200-.8.600-.1.400.2.800.6.800h9.700l.4-1.400z"/></svg><div class="a" style="left:825px;top:363px;width:260px;height:44px;background:#ededed"></div><div class="inp" style="left:825px;top:363px;width:260px;height:44px;border-radius:9px"></div><div class="a" style="left:839px;top:373px;width:232px;height:24px;background:#ededed"></div><svg class="i" style="left:1094.80px;top:341.00px;" width="20" height="20" viewBox="0 0 24 24"><path fill="#5f5f5f" d="M16 17V19H2V17S2 13 9 13 16 17 16 17M12.5 7.5A3.5 3.5 0 1 0 9 11A3.5 3.5 0 0 0 12.5 7.5M15.94 13A5.32 5.32 0 0 1 18 17V19H22V17S22 13.37 15.94 13M15 4A3.39 3.39 0 0 0 13.07 4.59A5 5 0 0 1 13.07 10.41A3.39 3.39 0 0 0 15 11A3.5 3.5 0 0 0 15 4Z"/></svg><div class="inp" style="left:1175px;top:363px;width:260px;height:44px;border-radius:9px"></div><div class="a" style="left:1189px;top:373px;width:78px;height:26px;border:1px solid #dcdcdc;border-radius:3px"></div><div class="a" style="left:1272px;top:373px;width:144px;height:26px;border:1px solid #dcdcdc;border-radius:3px"></div><svg class="i" style="left:1449px;top:367px" width="12" height="12" viewBox="0 0 12 12"><path d="M6 0v12M0 6h12" stroke="#444" stroke-width="1.250" fill="none"/></svg><div class="inp" style="left:1525px;top:385px;width:260px;height:44px;border-radius:9px"></div><div id="tx"><span class="t" style="left:111.60px;top:70.80px;font-size:15px;line-height:20px;font-weight:700;color:#062c45;letter-spacing:0.164px;">New contact</span>
<span class="t" style="left:59.40px;top:130.80px;font-size:15px;line-height:20px;font-weight:400;color:#222;letter-spacing:0.218px;">All contacts</span>
<span class="t" style="left:258.40px;top:131.40px;font-size:11.84px;line-height:20px;font-weight:700;color:#00679e;letter-spacing:-0.245px;">1003</span>
<span class="t" style="left:58.40px;top:178.80px;font-size:15px;line-height:20px;font-weight:400;color:#222;letter-spacing:0.528px;">Not grouped</span>
<span class="t" style="left:264.60px;top:179.25px;font-size:12.26px;line-height:20px;font-weight:700;color:#00679e;letter-spacing:-0.263px;">966</span>
<span class="t" style="left:37.60px;top:248.99px;font-size:14.46px;line-height:20px;font-weight:700;color:#3d93c4;letter-spacing:-0.290px;">Groups</span>
<span class="t" style="left:59.40px;top:308.80px;font-size:15px;line-height:20px;font-weight:400;color:#222;letter-spacing:0.103px;">colleague</span>
<span class="t" style="left:271.80px;top:309.55px;font-size:11.41px;line-height:20px;font-weight:700;color:#00679e;letter-spacing:0.456px;">17</span>
<span class="t" style="left:59.40px;top:356.80px;font-size:15px;line-height:20px;font-weight:400;color:#222;letter-spacing:0.273px;">customer</span>
<span class="t" style="left:278.50px;top:357.00px;font-size:13px;line-height:20px;font-weight:700;color:#00679e;letter-spacing:-0.600px;">7</span>
<span class="t" style="left:59.40px;top:404.80px;font-size:15px;line-height:20px;font-weight:400;color:#222;letter-spacing:0.604px;">friend</span>
<span class="t" style="left:278.50px;top:405.00px;font-size:13px;line-height:20px;font-weight:700;color:#00679e;letter-spacing:-0.600px;">5</span>
<span class="t" style="left:58.40px;top:452.80px;font-size:15px;line-height:20px;font-weight:400;color:#222;letter-spacing:-0.010px;">Line Dancing Group</span>
<span class="t" style="left:278.50px;top:453.00px;font-size:13px;line-height:20px;font-weight:700;color:#00679e;letter-spacing:-0.600px;">4</span>
<span class="t" style="left:59.40px;top:500.80px;font-size:15px;line-height:20px;font-weight:400;color:#222;letter-spacing:0.511px;">partner</span>
<span class="t" style="left:278.50px;top:501.00px;font-size:13px;line-height:20px;font-weight:700;color:#00679e;letter-spacing:-0.600px;">7</span>
<span class="t" style="left:37.60px;top:570.83px;font-size:14.93px;line-height:20px;font-weight:700;color:#3d93c4;letter-spacing:-0.295px;">Circles</span>
<span class="t" style="left:59.40px;top:630.80px;font-size:15px;line-height:20px;font-weight:400;color:#222;letter-spacing:0.295px;">Arbeitskreis</span>
<span class="t" style="left:278.50px;top:631.00px;font-size:13px;line-height:20px;font-weight:700;color:#00679e;letter-spacing:-0.600px;">1</span>
<span class="t" style="left:59.40px;top:678.80px;font-size:15px;line-height:20px;font-weight:400;color:#222;letter-spacing:-0.063px;">Company Handbook</span>
<span class="t" style="left:58.40px;top:726.80px;font-size:15px;line-height:20px;font-weight:400;color:#222;letter-spacing:0.170px;">Design</span>
<span class="t" style="left:278.50px;top:727.00px;font-size:13px;line-height:20px;font-weight:700;color:#00679e;letter-spacing:-0.600px;">3</span>
<span class="t" style="left:59.40px;top:774.80px;font-size:15px;line-height:20px;font-weight:400;color:#222;letter-spacing:0.143px;">this is new!</span>
<span class="t" style="left:59.40px;top:822.80px;font-size:15px;line-height:20px;font-weight:400;color:#222;letter-spacing:0.217px;">Verilium (customer)</span>
<span class="t" style="left:57.70px;top:1034.80px;font-size:15px;line-height:20px;font-weight:700;color:#5c5c5c;letter-spacing:-0.057px;">Contacts settings</span>
<span class="t" style="left:365.40px;top:67.50px;font-size:15px;line-height:20px;font-weight:400;color:#767676;letter-spacing:-0.045px;">Search contacts …</span>
<span class="t" style="left:367.50px;top:112.80px;font-size:15px;line-height:20px;font-weight:700;color:#222;letter-spacing:0.048px;">Abbott Frontczak</span>
<span class="t" style="left:367.50px;top:134.10px;font-size:15px;line-height:20px;font-weight:400;color:#222;letter-spacing:0.293px;">abbott@techapp.com</span>
<span class="t" style="left:367.50px;top:187.80px;font-size:15px;line-height:20px;font-weight:700;color:#222;letter-spacing:-0.185px;">Abby Galier</span>
<span class="t" style="left:324.10px;top:245.27px;font-size:22.3px;line-height:40px;font-weight:400;color:#c37285;letter-spacing:0.000px;transform:scaleX(0.9574);transform-origin:0 0;">AH</span>
<span class="t" style="left:367.50px;top:253.80px;font-size:15px;line-height:20px;font-weight:700;color:#222;letter-spacing:0.015px;">Abey Hawtin</span>
<span class="t" style="left:325.50px;top:311.27px;font-size:22.3px;line-height:40px;font-weight:400;color:#1e78c1;letter-spacing:0.000px;transform:scaleX(0.9352);transform-origin:0 0;">AP</span>
<span class="t" style="left:367.50px;top:319.80px;font-size:15px;line-height:20px;font-weight:700;color:#222;letter-spacing:-0.223px;">Ada Pleace</span>
<span class="t" style="left:367.50px;top:385.80px;font-size:15px;line-height:20px;font-weight:700;color:#222;letter-spacing:-0.262px;">Addy Greenhough</span>
<span class="t" style="left:367.50px;top:451.80px;font-size:15px;line-height:20px;font-weight:700;color:#222;letter-spacing:-0.021px;">Adel Entres</span>
<span class="t" style="left:324.50px;top:509.27px;font-size:22.3px;line-height:40px;font-weight:400;color:#c0539b;letter-spacing:0.000px;transform:scaleX(0.9641);transform-origin:0 0;">AA</span>
<span class="t" style="left:367.50px;top:517.80px;font-size:15px;line-height:20px;font-weight:700;color:#222;letter-spacing:-0.055px;">Adelina Axston</span>
<span class="t" style="left:322.50px;top:575.27px;font-size:22.3px;line-height:40px;font-weight:400;color:#d6b25a;letter-spacing:0.000px;transform:scaleX(1.0197);transform-origin:0 0;">AM</span>
<span class="t" style="left:367.50px;top:583.80px;font-size:15px;line-height:20px;font-weight:700;color:#222;letter-spacing:-0.185px;">Adina Mochar</span>
<span class="t" style="left:326.00px;top:641.27px;font-size:22.3px;line-height:40px;font-weight:400;color:#c98879;letter-spacing:0.000px;transform:scaleX(0.9564);transform-origin:0 0;">AL</span>
<span class="t" style="left:367.50px;top:649.80px;font-size:15px;line-height:20px;font-weight:700;color:#222;letter-spacing:0.019px;">Adrian Lelievre</span>
<span class="t" style="left:325.00px;top:707.27px;font-size:22.3px;line-height:40px;font-weight:400;color:#c98879;letter-spacing:0.000px;transform:scaleX(0.9070);transform-origin:0 0;">AG</span>
<span class="t" style="left:367.50px;top:715.80px;font-size:15px;line-height:20px;font-weight:700;color:#222;letter-spacing:0.006px;">Afton Goudie</span>
<span class="t" style="left:324.50px;top:773.27px;font-size:22.3px;line-height:40px;font-weight:400;color:#b6469d;letter-spacing:0.000px;transform:scaleX(0.9641);transform-origin:0 0;">AA</span>
<span class="t" style="left:367.50px;top:781.80px;font-size:15px;line-height:20px;font-weight:700;color:#222;letter-spacing:-0.213px;">Ag Anfonsi</span>
<span class="t" style="left:326.50px;top:839.27px;font-size:22.3px;line-height:40px;font-weight:400;color:#5fa888;letter-spacing:0.000px;transform:scaleX(0.9186);transform-origin:0 0;">AT</span>
<span class="t" style="left:367.50px;top:847.80px;font-size:15px;line-height:20px;font-weight:700;color:#222;letter-spacing:-0.230px;">Aggy Tarney</span>
<span class="t" style="left:325.50px;top:905.27px;font-size:22.3px;line-height:40px;font-weight:400;color:#b6469d;letter-spacing:0.000px;transform:scaleX(0.8746);transform-origin:0 0;">AC</span>
<span class="t" style="left:367.50px;top:913.80px;font-size:15px;line-height:20px;font-weight:700;color:#222;letter-spacing:0.102px;">Aksel Callicott</span>
<span class="t" style="left:324.10px;top:971.27px;font-size:22.3px;line-height:40px;font-weight:400;color:#3a68c0;letter-spacing:0.000px;transform:scaleX(0.9574);transform-origin:0 0;">AH</span>
<span class="t" style="left:367.50px;top:979.80px;font-size:15px;line-height:20px;font-weight:700;color:#222;letter-spacing:0.024px;">Alana Harner</span>
<span class="t" style="left:324.10px;top:1037.27px;font-size:22.3px;line-height:40px;font-weight:400;color:#c26a7e;letter-spacing:0.000px;transform:scaleX(0.9574);transform-origin:0 0;">AH</span>
<span class="t" style="left:367.50px;top:1045.80px;font-size:15px;line-height:20px;font-weight:700;color:#222;letter-spacing:-0.071px;">Aland Hedan</span>
<span class="t" style="left:774.40px;top:117.80px;font-size:15px;line-height:20px;font-weight:700;color:#222;letter-spacing:-0.175px;">Abby Galier</span>
<span class="t" style="left:774.40px;top:159.80px;font-size:15px;line-height:20px;font-weight:400;color:#222;letter-spacing:0.203px;">testing GmbH</span>
<span class="t" style="left:1299.60px;top:159.80px;font-size:15px;line-height:20px;font-weight:400;color:#222;letter-spacing:0.134px;">Just Awesome</span>
<span class="t" style="left:769.20px;top:221.79px;font-size:16.78px;line-height:24px;font-weight:400;color:#222;letter-spacing:-0.339px;">Phone</span>
<span class="t" style="left:756.50px;top:257.10px;font-size:15px;line-height:20px;font-weight:400;color:#a0a0a0;letter-spacing:0.277px;">Home</span>
<span class="t" style="left:879.30px;top:257.60px;font-size:15px;line-height:20px;font-weight:400;color:#222;letter-spacing:-0.036px;">86-(415)399-7662</span>
<span class="t" style="left:1119.20px;top:221.01px;font-size:17.3px;line-height:24px;font-weight:400;color:#222;letter-spacing:-0.279px;">Birthday</span>
<span class="t" style="left:1094.50px;top:257.10px;font-size:15px;line-height:20px;font-weight:400;color:#767676;letter-spacing:0.353px;">Birthday</span>
<span class="t" style="left:1229.30px;top:257.60px;font-size:15px;line-height:20px;font-weight:400;color:#222;letter-spacing:-0.001px;">August 30, 1984</span>
<span class="t" style="left:1469.20px;top:221.02px;font-size:17.25px;line-height:24px;font-weight:400;color:#222;letter-spacing:-0.109px;">Notes</span>
<span class="t" style="left:1523.80px;top:268.10px;font-size:15px;line-height:20px;font-weight:400;color:#767676;letter-spacing:0.379px;">Notes</span>
<span class="t" style="left:1578.30px;top:260.60px;font-size:15px;line-height:20px;font-weight:400;color:#222;letter-spacing:0.018px;">Looks like a bee!</span>
<span class="t" style="left:770.20px;top:339.35px;font-size:16.6px;line-height:24px;font-weight:400;color:#222;letter-spacing:-0.334px;">Address book</span>
<span class="t" style="left:745.50px;top:375.10px;font-size:15px;line-height:20px;font-weight:400;color:#767676;letter-spacing:-0.037px;">Address …</span>
<span class="t" style="left:839.70px;top:375.30px;font-size:15px;line-height:20px;font-weight:400;color:#7c7c7c;letter-spacing:0.044px;">Contacts</span>
<span class="t" style="left:1120.20px;top:338.88px;font-size:16.21px;line-height:24px;font-weight:400;color:#222;letter-spacing:-0.258px;">Groups</span>
<span class="t" style="left:1126.80px;top:375.10px;font-size:15px;line-height:20px;font-weight:400;color:#767676;letter-spacing:-0.218px;">Groups</span>
<span class="t" style="left:1195.50px;top:375.80px;font-size:15px;line-height:20px;font-weight:400;color:#222;letter-spacing:0.115px;">colleague</span>
<span class="t" style="left:1277.30px;top:375.80px;font-size:15px;line-height:20px;font-weight:400;color:#222;letter-spacing:-0.034px;">Line Dancing Group</span>
<span class="t" style="left:1470.20px;top:360.71px;font-size:17.3px;line-height:24px;font-weight:400;color:#222;letter-spacing:-0.347px;">Add new property</span>
<span class="t" style="left:1539.70px;top:398.80px;font-size:15px;line-height:20px;font-weight:400;color:#7c7c7c;letter-spacing:0.207px;">Choose property type</span>
<span class="t" style="left:864.40px;top:467.10px;font-size:15px;line-height:20px;font-weight:400;color:#ababab;letter-spacing:0.087px;">Last modified seconds ago</span></div></body></html>
